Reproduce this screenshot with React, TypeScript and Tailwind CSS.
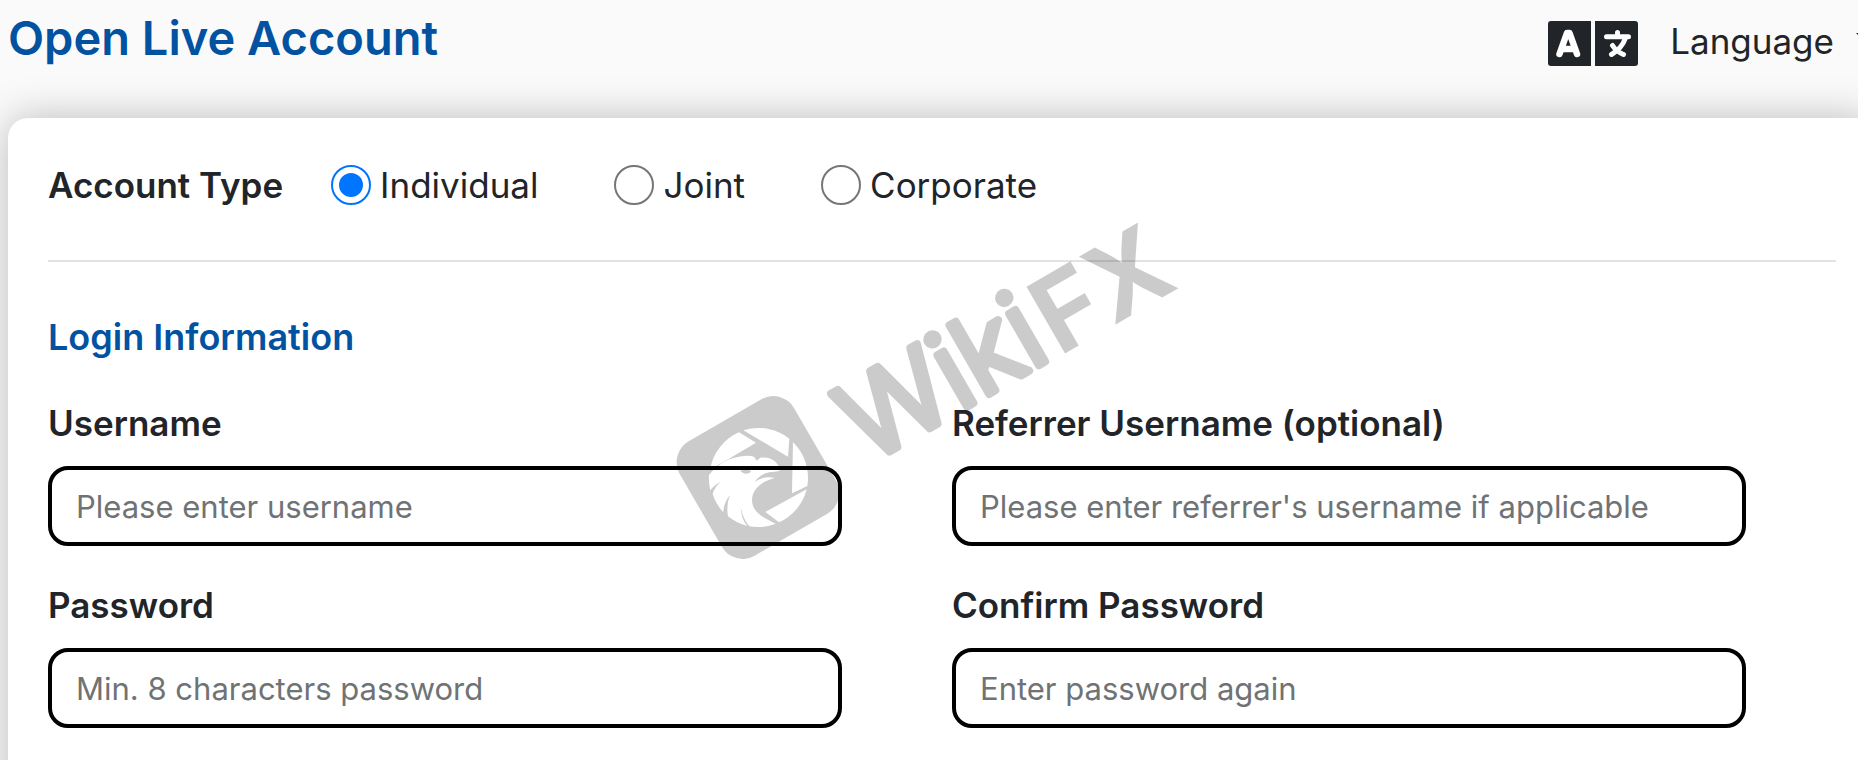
import { useId, useState } from 'react'

type AccountType = 'individual' | 'joint' | 'corporate'

const ACCOUNT_TYPES: { key: AccountType; label: string }[] = [
  { key: 'individual', label: 'Individual' },
  { key: 'joint', label: 'Joint' },
  { key: 'corporate', label: 'Corporate' },
]

const FIELDS = [
  { name: 'username', type: 'text', label: 'Username', placeholder: 'Please enter username' },
  {
    name: 'referrer',
    type: 'text',
    label: 'Referrer Username (optional)',
    placeholder: "Please enter referrer's username if applicable",
  },
  { name: 'password', type: 'password', label: 'Password', placeholder: 'Min. 8 characters password' },
  { name: 'confirm', type: 'password', label: 'Confirm Password', placeholder: 'Enter password again' },
]

function LanguageIcon() {
  return (
    <svg viewBox="0 0 90 45" className="w-[90px] h-[45px] shrink-0" aria-hidden="true">
      <path fill="#212529" d="M3 0h40v45H3a3 3 0 0 1-3-3V3a3 3 0 0 1 3-3ZM47 0h40a3 3 0 0 1 3 3v39a3 3 0 0 1-3 3H47Z" />
      <g fill="none" stroke="#fff" strokeLinecap="round" strokeLinejoin="round">
        <path strokeWidth="6.500" d="M11.500 33 19 12h2.500L29 33M15 28h10" />
        <path strokeWidth="5" d="M58.500 15.700h22M69.500 11.500v4M77.500 17c-2.500 7-7 12.500-14 16.500M64.500 24.500c2.500 4 6.500 7 11 9" />
      </g>
    </svg>
  )
}

// Brand mark laid over the form, never takes clicks
function Watermark() {
  const cutout = useId()
  return (
    <svg
      viewBox="0 0 560 420"
      className="absolute left-[660px] top-[150px] w-[560px] h-[420px] opacity-20 pointer-events-none"
      aria-hidden="true"
    >
      <mask id={cutout}>
        <rect x="32" y="261.500" width="132" height="132" rx="24" fill="#fff" transform="rotate(-30 98 327.500)" />
        <g transform="translate(0 230) scale(.33333)">
          {/* shutter blades */}
          <path d="M237 157 288 188 175 255 151 264A148 148 0 0 1 237 157Z" />
          <path d="M250 151A148 148 0 0 1 388 176L384 230Z" />
          <path d="M399 187A148 148 0 0 1 442 318L396 340Z" />
          <path d="M440 328A148 148 0 0 1 357 427L316 396Z" />
          {/* eagle head */}
          <path d="M147 285C170 256 205 229 260 227Q277 227 283 231L290 242 301 233C330 229 354 243 361 271Q352 276 335 276C312 278 293 290 285 306 303 293 322 289 344 294 312 302 277 322 276 360 276 385 290 406 347 431A148 148 0 0 1 268 439Q248 415 242 381 243 416 262 438A148 148 0 0 1 204 409Q198 375 210 345 190 370 190 397A148 148 0 0 1 158 342Q164 320 182 305 162 315 151 331A148 148 0 0 1 147 285Z" />
          <path fill="#fff" d="M240 273Q258 264 274 273 268 283 256 281 248 280 240 273Z" />
        </g>
      </mask>
      <rect width="560" height="420" mask={`url(#${cutout})`} />
      <text
        x="208"
        y="314"
        transform="rotate(-30 208 314)"
        fontFamily="Inter, sans-serif"
        fontSize="109"
        fontWeight="300"
        stroke="#000"
        strokeWidth="8"
        strokeLinejoin="round"
      >
        Wiki
      </text>
      <text
        x="399"
        y="207"
        transform="rotate(-30 399 207)"
        fontFamily="Inter, sans-serif"
        fontSize="106"
        fontWeight="700"
      >
        FX
      </text>
    </svg>
  )
}

export default function App() {
  const [accountType, setAccountType] = useState<AccountType>('individual')

  return (
    <div className="relative min-h-screen flex flex-col overflow-hidden bg-[#fafafa] font-['Inter',sans-serif] text-[#212529]">
      <div className="ml-2 -mr-[18px] flex flex-1 flex-col">
        {/* Header */}
        <header className="flex h-[118px] items-start justify-between">
          <h1 className="pt-2 text-[47px] leading-[60px] font-semibold text-[#0152a1]">Open Live Account</h1>
          <button className="flex items-start gap-[22px] pt-[21px] text-[35px] leading-[40px]">
            <span className="flex items-start gap-8">
              <LanguageIcon />
              Language
            </span>
            <span className="mt-3 border-x-[10px] border-t-[10px] border-x-transparent border-t-[#212529]" />
          </button>
        </header>

        <main className="-mb-10 flex-1 rounded-t-[20px] bg-white px-10 pt-10 pb-[72px] shadow-[0_0_40px_rgba(0,0,0,0.25)]">
          {/* Account type */}
          <fieldset className="flex items-center gap-12 border-b-2 border-[#e2e2e2] pb-12">
            <legend className="float-left text-[35px] leading-[54px] font-semibold">Account Type</legend>
            <div className="flex gap-[76px]">
              {ACCOUNT_TYPES.map(({ key, label }) => (
                <label key={key} className="flex items-center gap-[9px] text-[35px] leading-[54px]">
                  <input
                    type="radio"
                    name="accountType"
                    checked={accountType === key}
                    onChange={() => setAccountType(key)}
                    className="size-10 appearance-none rounded-full border-2 border-[#767676] checked:border-[#0075ff] checked:bg-[#0075ff] checked:bg-clip-content checked:p-1.5"
                  />
                  {label}
                </label>
              ))}
            </div>
          </fieldset>

          {/* Login information */}
          <section>
            <h2 className="pt-12 text-[36px] leading-[54px] font-semibold text-[#0152a1]">Login Information</h2>
            <div className="grid grid-cols-2 gap-x-[110px] gap-y-8 pt-8 pr-[90px]">
              {FIELDS.map(({ name, type, label, placeholder }) => (
                <div key={name} className="flex flex-col gap-4">
                  <label htmlFor={name} className="text-[35px] leading-[54px] font-semibold">
                    {label}
                  </label>
                  <input
                    id={name}
                    type={type}
                    placeholder={placeholder}
                    className="h-20 w-full rounded-[20px] border-4 border-black bg-white px-6 text-[31px] placeholder:text-[#6f7375]"
                  />
                </div>
              ))}
            </div>
          </section>
        </main>
      </div>
      <Watermark />
    </div>
  )
}
